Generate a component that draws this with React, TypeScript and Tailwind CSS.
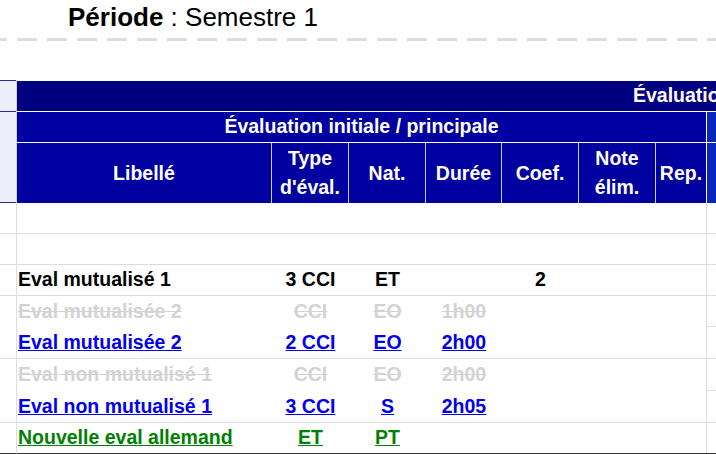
import React from 'react';

type Kind = 'plain' | 'struck' | 'link' | 'green';

interface EvalRow {
  lib?: string;
  type?: string;
  nat?: string;
  duree?: string;
  coef?: string;
  kind: Kind;
  line: boolean;
  tall?: boolean;
  last?: boolean;
}

const rows: EvalRow[] = [
  { kind: 'plain', line: true },
  { kind: 'plain', line: true },
  { lib: 'Eval mutualisé 1', type: '3 CCI', nat: 'ET', coef: '2', kind: 'plain', line: true },
  { lib: 'Eval mutualisée 2', type: 'CCI', nat: 'EO', duree: '1h00', kind: 'struck', line: false },
  { lib: 'Eval mutualisée 2', type: '2 CCI', nat: 'EO', duree: '2h00', kind: 'link', line: true, tall: true },
  { lib: 'Eval non mutualisé 1', type: 'CCI', nat: 'EO', duree: '2h00', kind: 'struck', line: false, tall: true },
  { lib: 'Eval non mutualisé 1', type: '3 CCI', nat: 'S', duree: '2h05', kind: 'link', line: true, tall: true },
  { lib: 'Nouvelle eval allemand', type: 'ET', nat: 'PT', kind: 'green', line: true, last: true },
];

const kindClass: Record<Kind, string> = {
  plain: 'text-black',
  struck: 'text-[#d3d3d3] line-through',
  link: 'text-[#0000ee] underline',
  green: 'text-[#008000] underline',
};

const Txt: React.FC<{ value?: string; kind: Kind }> = ({ value, kind }) =>
  value ? <span className={kindClass[kind]}>{value}</span> : null;

const BodyRow: React.FC<{ row: EvalRow }> = ({ row }) => {
  const h = row.tall ? 'h-[32px]' : 'h-[31px]';
  const edge = row.last ? 'border-b border-[#333333]' : row.line ? 'border-b border-[#dddddd]' : '';
  const rightEdge = row.last ? 'border-b border-[#333333]' : 'border-b border-[#dddddd]';
  return (
    <div className={`flex ${h}`}>
      <div className={`w-[17px] shrink-0 border-r border-r-[#dddddd] ${edge}`} />
      <div className={`flex items-center w-[690px] shrink-0 ${edge}`}>
        <div className="w-[255px] shrink-0 pl-[1px] whitespace-nowrap">
          <Txt value={row.lib} kind={row.kind} />
        </div>
        <div className="w-[77px] shrink-0 text-center">
          <Txt value={row.type} kind={row.kind} />
        </div>
        <div className="w-[77px] shrink-0 text-center">
          <Txt value={row.nat} kind={row.kind} />
        </div>
        <div className="w-[76px] shrink-0 text-center">
          <Txt value={row.duree} kind={row.kind} />
        </div>
        <div className="w-[77px] shrink-0 text-center">
          <Txt value={row.coef} kind={row.kind} />
        </div>
        <div className="w-[77px] shrink-0" />
        <div className="w-[51px] shrink-0 h-full border-r border-r-[#dddddd]" />
      </div>
      <div className={`flex-1 ${rightEdge}`} />
    </div>
  );
};

export default function App() {
  return (
    <div className="w-[716px] h-[454px] overflow-hidden bg-white font-['Liberation_Sans',Arial,sans-serif] text-black">
      {/* Période */}
      <div className="h-[38px] pl-[68px] pt-[2px] text-[26px] leading-[30px] whitespace-nowrap">
        <span className="font-bold">Période</span> : Semestre 1
      </div>
      <div className="h-[3px] bg-[repeating-linear-gradient(90deg,#dddddd_0_7px,transparent_7px_17px,#dddddd_17px_30px)]" />
      <div className="h-[39px]" />

      {/* Table header */}
      <div className="flex text-[19.5px] font-bold text-white">
        <div className="w-[17px] shrink-0 flex flex-col bg-[#eeeefa] border-r border-r-[#d0d0d8]">
          <div className="h-[32px] border-y border-[#2a2a9c]" />
          <div className="h-[91px] border-b border-[#2a2a9c]" />
        </div>
        <div className="flex-1 min-w-0 flex flex-col">
          <div className="h-[31px] border-t border-white bg-[#000080] flex items-center pl-[616px] whitespace-nowrap overflow-hidden">
            Évaluation
          </div>
          <div className="h-[31px] border-t border-white flex">
            <div className="w-[690px] shrink-0 bg-[#0000a0] border-r border-white flex items-center justify-center">
              Évaluation initiale / principale
            </div>
            <div className="flex-1 bg-[#0a26b8]" />
          </div>
          <div className="h-[61px] border-t border-white flex leading-[29px] text-center">
            <div className="w-[255px] shrink-0 bg-[#0000a0] border-r border-[#ccccdf] flex items-center justify-center">Libellé</div>
            <div className="w-[77px] shrink-0 bg-[#0000a0] border-r border-[#ccccdf] flex items-center justify-center">
              Type<br />d'éval.
            </div>
            <div className="w-[77px] shrink-0 bg-[#0000a0] border-r border-[#ccccdf] flex items-center justify-center">Nat.</div>
            <div className="w-[76px] shrink-0 bg-[#0000a0] border-r border-[#ccccdf] flex items-center justify-center">Durée</div>
            <div className="w-[77px] shrink-0 bg-[#0000a0] border-r border-[#ccccdf] flex items-center justify-center">Coef.</div>
            <div className="w-[77px] shrink-0 bg-[#0000a0] border-r border-[#ccccdf] flex items-center justify-center">
              Note<br />élim.
            </div>
            <div className="w-[51px] shrink-0 bg-[#0000a0] border-r border-white flex items-center justify-center">Rep.</div>
            <div className="flex-1 bg-[#0a26b8]" />
          </div>
        </div>
      </div>

      {/* Table body */}
      <div className="text-[19.5px] font-bold">
        {rows.map((row, i) => (
          <BodyRow key={i} row={row} />
        ))}
      </div>
    </div>
  );
}
